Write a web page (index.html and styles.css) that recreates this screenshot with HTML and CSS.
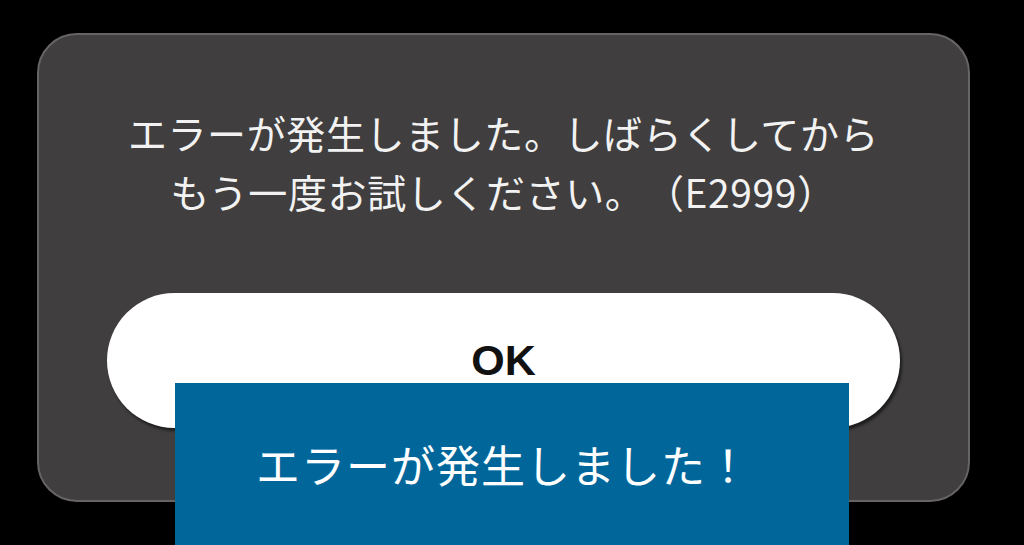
FILE: index.html
```html
<!DOCTYPE html>
<html lang="ja">
<head>
<meta charset="utf-8">
<title>エラー</title>
<link rel="stylesheet" href="styles.css">
</head>
<body>
<div class="stage">
  <div class="dialog">
    <p class="message">エラーが発生しました。しばらくしてから<br>もう一度お試しください。　（E2999）</p>
    <div class="ok-button">OK</div>
  </div>
  <div class="caption">エラーが発生しました！</div>
</div>
</body>
</html>
```
FILE: styles.css
```css
html, body {
  margin: 0;
  padding: 0;
  background: #000;
  width: 1024px;
  height: 545px;
  overflow: hidden;
}

.stage {
  position: relative;
  width: 1024px;
  height: 545px;
  padding: 33px 0 0 37px;
  box-sizing: border-box;
}

.dialog {
  width: 933px;
  height: 469px;
  box-sizing: border-box;
  background: #403e3e;
  border: 2px solid #666464;
  border-radius: 40px;
  display: flex;
  flex-direction: column;
  align-items: center;
  padding: 68px 68px 0;
}

.message {
  margin: 0;
  color: #f2f2f2;
  font-family: "Noto Sans CJK JP", sans-serif;
  font-size: 39px;
  letter-spacing: 0.6px;
  line-height: 59px;
  text-align: center;
  white-space: nowrap;
}

.ok-button {
  margin-top: 72px;
  width: 793px;
  height: 135px;
  border-radius: 68px;
  background: #fff;
  box-shadow: 2px 3px 3px rgba(0, 0, 0, 0.55);
  display: flex;
  align-items: center;
  justify-content: center;
  color: #111;
  font-family: "Liberation Sans", Arial, sans-serif;
  font-weight: bold;
  font-size: 43px;
}

.caption {
  position: absolute;
  left: 175px;
  top: 383px;
  width: 674px;
  height: 162px;
  box-sizing: border-box;
  background: #01679b;
  color: #fff;
  font-family: "Noto Sans CJK JP", sans-serif;
  font-size: 44px;
  letter-spacing: 1px;
  display: flex;
  align-items: center;
  padding-left: 81px;
  white-space: nowrap;
}
```
